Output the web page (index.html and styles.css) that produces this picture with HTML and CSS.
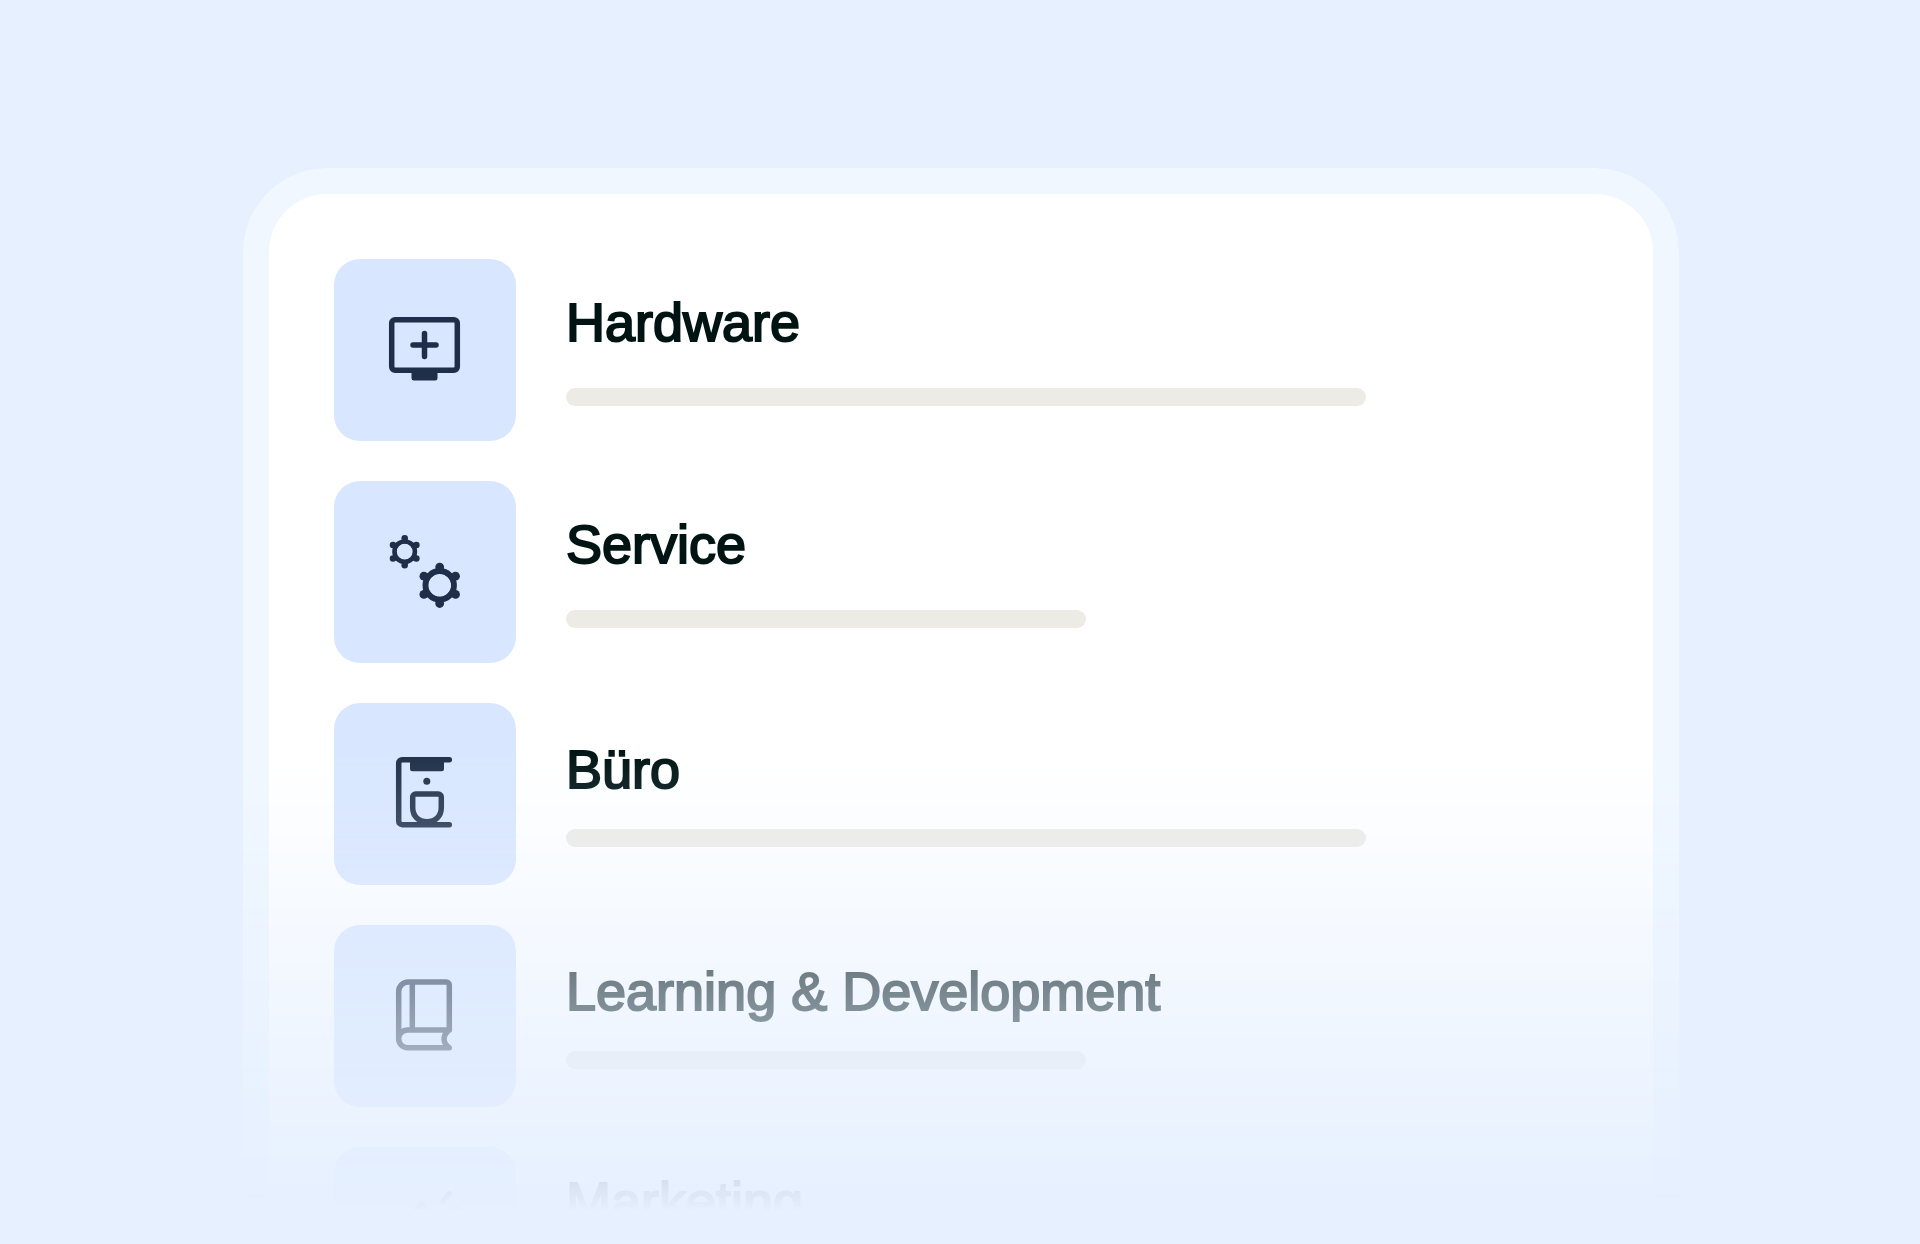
FILE: index.html
```
<!DOCTYPE html>
<html lang="de">
<head>
  <meta charset="UTF-8">
  <meta name="viewport" content="width=device-width, initial-scale=1.0">
  <title>Kategorien</title>
  <link rel="stylesheet" href="styles.css">
</head>
<body>

  <main class="screen">
    <div class="frame">
      <ul class="card">

        <!-- Hardware -->
        <li class="item">
          <div class="tile">
            <svg class="icon" viewBox="0 0 72 72" aria-hidden="true">
              <rect x="2.7" y="5.7" width="65.6" height="50.6" rx="3.5"/>
              <path d="M24 31h23M35.5 19.5v23"/>
              <path class="solid" d="M22.5 57h26v7a2.5 2.5 0 0 1-2.5 2.5h-21a2.5 2.5 0 0 1-2.5-2.5z"/>
            </svg>
          </div>
          <div class="info">
            <h2 class="title">Hardware</h2>
            <div class="bar"></div>
          </div>
        </li>

        <!-- Service -->
        <li class="item">
          <div class="tile">
            <svg class="icon" viewBox="0 0 72 72" aria-hidden="true">
              <defs>
                <g id="teeth">
                  <path d="M0-20l5 5.500 12.300 4.500-2 6.500v7l2 6.500-12.300 4.500-5 5.500-5-5.500-12.300-4.500 2-6.500v-7l-2-6.500 12.300-4.500zM11.500 0a11.500 11.500 0 1 0-23 0 11.500 11.500 0 1 0 23 0z" fill-rule="evenodd"/>
                  <circle cx="0" cy="-18.2" r="4.4"/>
                  <circle cx="15.8" cy="-9.1" r="4.4"/>
                  <circle cx="15.8" cy="9.1" r="4.4"/>
                  <circle cx="0" cy="18.2" r="4.4"/>
                  <circle cx="-15.8" cy="9.1" r="4.4"/>
                  <circle cx="-15.8" cy="-9.1" r="4.4"/>
                </g>
              </defs>
              <g transform="translate(15.7 15.7)">
                <circle r="10.2" stroke-width="4.6"/>
                <use class="solid" href="#teeth" transform="scale(.74)"/>
              </g>
              <g transform="translate(50.7 49.3)">
                <circle r="14.3" stroke-width="5.8"/>
                <use class="solid" href="#teeth"/>
              </g>
            </svg>
          </div>
          <div class="info">
            <h2 class="title">Service</h2>
            <div class="bar short"></div>
          </div>
        </li>

        <!-- Büro -->
        <li class="item dense">
          <div class="tile">
            <svg class="icon" viewBox="0 0 72 72" aria-hidden="true">
              <path d="M60.3 1.7H13.2a3.5 3.5 0 0 0-3.5 3.5v58a3.5 3.5 0 0 0 3.5 3.5h47.1"/>
              <path class="solid" d="M21 2h34v8.8a2.5 2.5 0 0 1-2.5 2.5h-29a2.5 2.5 0 0 1-2.5-2.5z"/>
              <circle class="solid" cx="37.8" cy="23.3" r="3.5"/>
              <path d="M26.7 36h22.6a3 3 0 0 1 3 3v10.5c0 9-6 14.3-14.3 14.3s-14.3-5.3-14.3-14.3v-10.5a3 3 0 0 1 3-3z"/>
            </svg>
          </div>
          <div class="info">
            <h2 class="title">Büro</h2>
            <div class="bar"></div>
          </div>
        </li>

        <!-- Learning & Development -->
        <li class="item dense">
          <div class="tile">
            <svg class="icon" viewBox="0 0 72 72" aria-hidden="true">
              <path d="M9.7 59V11.5a9.5 9.5 0 0 1 9.5-9.5h38.1a3 3 0 0 1 3 3v45H18.5a8.8 8.8 0 0 0 0 17.7h41.8c-7-5-7-12.5 0-17.7M23.3 2v48"/>
            </svg>
          </div>
          <div class="info">
            <h2 class="title">Learning &amp; Development</h2>
            <div class="bar short"></div>
          </div>
        </li>

        <!-- Marketing -->
        <li class="item last">
          <div class="tile">
            <svg class="icon" viewBox="0 0 72 72" aria-hidden="true">
              <path d="M54 10l6-7M62 20l8-2M33 13l22 27-35 7-10 3-6-8 7-7z"/>
            </svg>
          </div>
          <div class="info">
            <h2 class="title">Marketing</h2>
            <div class="bar"></div>
          </div>
        </li>

      </ul>
    </div>
  </main>

</body>
</html>
```
FILE: styles.css
```
* {
  box-sizing: border-box;
}

body {
  margin: 0;
  background-color: #e6f0ff;
  font-family: "Liberation Sans", Arial, sans-serif;
  color: #001414;
}

.screen {
  height: 100vh;
  padding: 168px 241px 0 243px;
  overflow: hidden;
}

/* translucent frame, list fades out towards the bottom */
.frame {
  padding: 26px;
  border-radius: 84px 84px 0 0;
  background-color: #f0f7ff;
  -webkit-mask-image: linear-gradient(#000 580px, transparent 1044px);
  mask-image: linear-gradient(#000 580px, transparent 1044px);
}

.card {
  display: flex;
  flex-direction: column;
  gap: 40px;
  margin: 0;
  padding: 65px;
  list-style: none;
  border-radius: 58px 58px 0 0;
  background-color: #fff;
}

.item {
  display: flex;
  align-items: center;
  gap: 50px;
}

/* icon tile */
.tile {
  display: flex;
  flex: none;
  align-items: center;
  justify-content: center;
  width: 182px;
  height: 182px;
  border-radius: 26px;
  background-color: #d8e6ff;
}

.icon {
  width: 72px;
  height: 72px;
  overflow: visible;
  fill: none;
  stroke: #1f2f49;
  stroke-width: 5.5;
  stroke-linecap: round;
  stroke-linejoin: round;
}

.solid {
  fill: #1f2f49;
  stroke: none;
}

/* title and placeholder line */
.info {
  display: flex;
  flex: 1;
  flex-direction: column;
  gap: 38px;
}

.dense .info {
  gap: 32px;
}

.last .info {
  gap: 56px;
}

.last .tile {
  align-items: flex-start;
  padding-top: 44px;
}

.title {
  margin: 0;
  font-size: 54px;
  font-weight: 400;
  line-height: 56px;
  -webkit-text-stroke: 2px currentColor;
}

.bar {
  width: 100%;
  max-width: 800px;
  height: 18px;
  border-radius: 9px;
  background-color: #ecebe6;
}

.bar.short {
  max-width: 520px;
}
```
